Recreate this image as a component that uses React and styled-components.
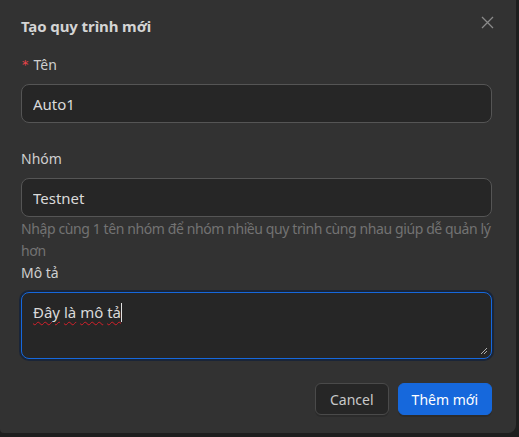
import React from "react"
import styled, { createGlobalStyle } from "styled-components"

const GlobalStyle = createGlobalStyle`
  html, body {
    margin: 0;
    padding: 0;
    background: #1e1e1e;
    font-family: "Noto Sans", "Open Sans", sans-serif;
  }
  * { box-sizing: border-box; }
`

const Modal = styled.div`
  position: relative;
  width: 516px;
  height: 433px;
  background: #323232;
  border-radius: 0 0 8px 4px;
  padding: 15px 24px 19px 21px;
  display: flex;
  flex-direction: column;
`

const Title = styled.div`
  font-size: 15px;
  font-weight: 700;
  line-height: 22px;
  color: #d4d4d4;
  margin-bottom: 17px;
  letter-spacing: -0.1px;
`

const CloseButton = styled.button`
  position: absolute;
  top: 14px;
  right: 21px;
  width: 16px;
  height: 16px;
  padding: 0;
  border: none;
  background: transparent;
  display: flex;
  align-items: center;
  justify-content: center;
  cursor: pointer;
`

const Field = styled.div`
  display: flex;
  flex-direction: column;
  margin-bottom: ${(p) => p.$gap || 0}px;
`

const Label = styled.label`
  font-size: 14px;
  line-height: 22px;
  color: #cfcfcf;
  margin-bottom: 8px;
  display: flex;
  align-items: center;
`

const Required = styled.span`
  color: #e8444a;
  font-size: 13px;
  margin-right: 5px;
  margin-left: 1px;
  font-family: "DejaVu Sans", sans-serif;
`

const Input = styled.input`
  height: 39px;
  width: 100%;
  background: #262626;
  border: 1px solid #555555;
  border-radius: 8px;
  padding: 0 11px;
  font-family: inherit;
  font-size: 15px;
  color: #dadada;
  outline: none;
`

const Help = styled.div`
  font-size: 14px;
  line-height: 22px;
  color: #737373;
  padding-top: 1px;
  letter-spacing: -0.4px;
`

const TextBox = styled.div`
  position: relative;
  height: 67px;
  background: #262626;
  border: 1px solid #1668dc;
  border-radius: 8px;
  box-shadow: 0 0 0 2px #1a2538;
  padding: 7px 11px;
  font-size: 15px;
  line-height: 24px;
  color: #dadada;
`

const Word = styled.span`
  text-decoration: underline wavy #d4202a;
  text-decoration-thickness: 1px;
  text-underline-offset: 3px;
`

const Caret = styled.span`
  display: inline-block;
  width: 1px;
  height: 19px;
  background: #e0e0e0;
  vertical-align: -4px;
`

const Grip = styled.svg`
  position: absolute;
  right: 3px;
  bottom: 3px;
`

const Footer = styled.div`
  margin-top: 24px;
  display: flex;
  justify-content: flex-end;
  gap: 9px;
`

const Button = styled.button`
  height: 32px;
  padding: 0 ${(p) => (p.$primary ? 13 : 14)}px;
  border-radius: 6px;
  font-family: inherit;
  font-size: 14px;
  cursor: pointer;
  border: 1px solid ${(p) => (p.$primary ? "#1668dc" : "#4a4a4a")};
  background: ${(p) => (p.$primary ? "#1668dc" : "#262626")};
  color: ${(p) => (p.$primary ? "#ffffff" : "#c9c9c9")};
  box-shadow: 0 2px 0 rgba(0, 0, 0, 0.12);
`

export default function App() {
  return (
    <>
      <GlobalStyle />
      <Modal>
        <Title>Tạo quy trình mới</Title>
        <CloseButton aria-label="Close">
          <svg width="13" height="13" viewBox="0 0 13 13">
            <path d="M1 1 L12 12 M12 1 L1 12" stroke="#8a8a8a" strokeWidth="1.3" />
          </svg>
        </CloseButton>

        <Field $gap={25}>
          <Label>
            <Required>*</Required>Tên
          </Label>
          <Input defaultValue="Auto1" />
        </Field>

        <Field>
          <Label>Nhóm</Label>
          <Input defaultValue="Testnet" />
          <Help>Nhập cùng 1 tên nhóm để nhóm nhiều quy trình cùng nhau giúp dễ quản lý hơn</Help>
        </Field>

        <Field>
          <Label>Mô tả</Label>
          <TextBox role="textbox">
            <Word>Đây</Word> <Word>là</Word> <Word>mô</Word> <Word>tả</Word>
            <Caret />
            <Grip width="8" height="8" viewBox="0 0 8 8">
              <path d="M1 7 L7 1 M4 7 L7 4" stroke="#b0b0b0" strokeWidth="1" />
            </Grip>
          </TextBox>
        </Field>

        <Footer>
          <Button>Cancel</Button>
          <Button $primary>Thêm mới</Button>
        </Footer>
      </Modal>
    </>
  )
}
